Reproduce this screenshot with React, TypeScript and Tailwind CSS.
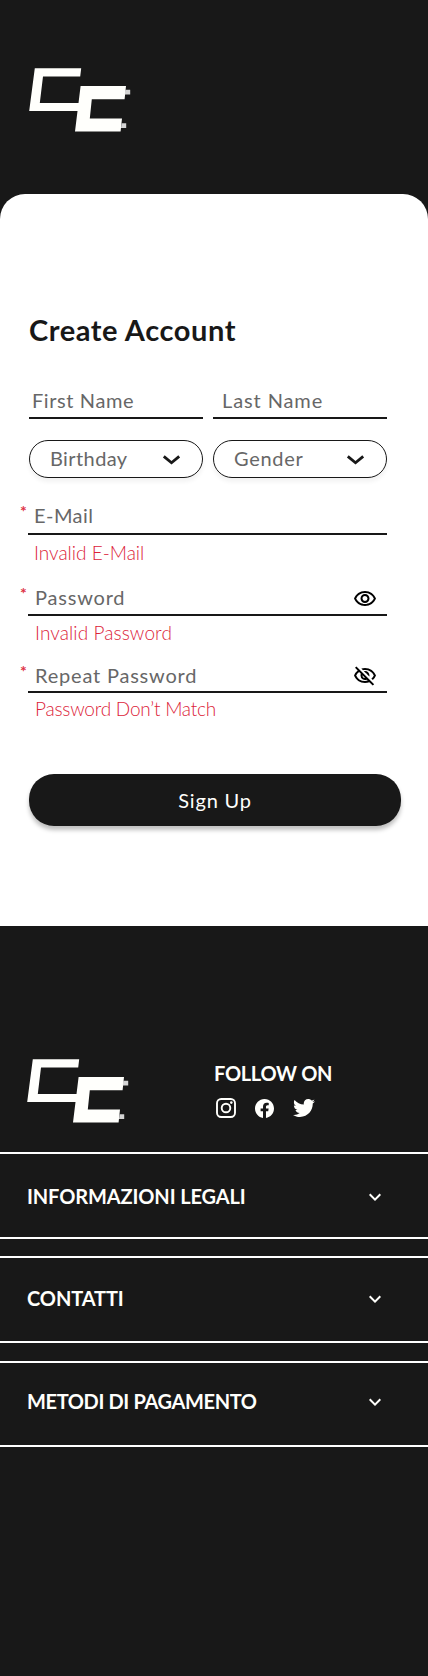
import React from "react";
import { MdOutlineVisibility, MdOutlineVisibilityOff, MdKeyboardArrowDown } from "react-icons/md";
import { BsFacebook } from "react-icons/bs";
import { FaTwitter } from "react-icons/fa";

function Logo() {
  return (
    <svg width="102" height="64" viewBox="0 0 102 64" className="block" aria-label="CC">
      <path d="M5.8 .3H52.2L51.2 8.6H14L10.8 35H50.4L49.6 42.9H.2Z" fill="#fffffc" />
      <path d="M51.6 18H97L95.6 31.2H62.8L60.8 50.5H93L91.6 63.6H46Z" fill="#fffffc" />
      <path d="M96.2 21.8H101.2V26.4H95.8ZM92.6 55.2H97.2V60H92Z" fill="#d4d4d4" />
    </svg>
  );
}

function Chevron() {
  return (
    <svg width="19" height="11" viewBox="0 0 19 11" fill="none" className="block">
      <path d="M1.8 2.4L9.5 8.8L17.2 2.4" stroke="#181818" strokeWidth="2.8" />
    </svg>
  );
}

function Instagram() {
  return (
    <svg width="20" height="20" viewBox="0 0 20 20" fill="none" className="block">
      <rect x="1" y="1" width="18" height="18" rx="4.2" stroke="#fffffc" strokeWidth="1.9" />
      <circle cx="10" cy="10" r="4.3" stroke="#fffffc" strokeWidth="1.9" />
      <circle cx="15.3" cy="4.6" r="1.3" fill="#fffffc" />
    </svg>
  );
}

function Select({ label, spacing }: { label: string; spacing: string }) {
  return (
    <button className="flex h-[38px] w-[174px] items-center justify-between rounded-[19px] border border-[#181818] bg-white pr-[21px] pl-[20px] shadow-[0_4px_4px_rgba(0,0,0,0.05)]">
      <span className={`mb-[2px] leading-6 text-[#676767] ${spacing}`}>{label}</span>
      <Chevron />
    </button>
  );
}

function Field({ label, box, spacing, icon }: { label: string; box: string; spacing: string; icon?: React.ReactNode }) {
  return (
    <div className={`relative ml-[-1px] flex w-[359px] items-start justify-between border-b-2 border-[#181818] pr-[10px] text-[#676767] ${box}`}>
      <span className="absolute top-[0px] left-[-8px] text-[16px] leading-4 font-bold text-[#dd3344]">*</span>
      <span className={`leading-6 ${spacing}`}>{label}</span>
      {icon}
    </div>
  );
}

function Section({ title, box, spacing }: { title: string; box: string; spacing: string }) {
  return (
    <div className={`flex items-start justify-between border-y-2 border-white pr-[41px] pl-[27px] ${box}`}>
      <span className={`leading-6 font-bold text-[#fffffc] ${spacing}`}>{title}</span>
      <MdKeyboardArrowDown size={24} color="#fffffc" className="mt-[1px]" />
    </div>
  );
}

export default function App() {
  return (
    <div className="min-h-[1676px] w-[428px] bg-[#181818] font-['Lato',sans-serif] text-[20px] whitespace-nowrap">
      <header className="h-[194px] pt-[68px] pl-[29px]">
        <Logo />
      </header>
      <main className="h-[732px] rounded-t-[25px] bg-white pt-[119px] pr-[27px] pl-[29px]">
        <h1 className="text-[29px] leading-[34px] font-bold tracking-[0.58px] text-[#181818]">Create Account</h1>
        <div className="mt-[41px] flex gap-[10px] text-[#676767]">
          <div className="h-[31px] w-[174px] border-b-2 border-[#181818] pl-[3px] leading-6 tracking-[0.6px]">First Name</div>
          <div className="h-[31px] w-[174px] border-b-2 border-[#181818] pl-[9px] leading-6 tracking-[0.9px]">Last Name</div>
        </div>
        <div className="mt-[21px] flex gap-[10px]">
          <Select label="Birthday" spacing="tracking-[0.4px]" />
          <Select label="Gender" spacing="tracking-[0.7px]" />
        </div>
        <Field label="E-Mail" box="mt-[25px] h-[32px] pl-[6px]" spacing="tracking-[0.45px]" />
        <p className="mt-[6px] pl-[5px] text-[19px] leading-6 font-light text-[#dc2339]">Invalid E-Mail</p>
        <Field label="Password" box="mt-[20px] h-[31px] pl-[7px]" spacing="tracking-[0.8px]" icon={<MdOutlineVisibility size={24} color="#000" className="mt-[2px]" />} />
        <p className="mt-[5px] pl-[6px] text-[19px] leading-6 font-light tracking-[0.1px] text-[#dc2339]">Invalid Password</p>
        <Field label="Repeat Password" box="mt-[18px] h-[30px] pl-[7px]" spacing="tracking-[0.8px]" icon={<MdOutlineVisibilityOff size={24} color="#000" className="mt-[1px]" />} />
        <p className="mt-[4px] pl-[6px] text-[19px] leading-6 font-light tracking-[-0.22px] text-[#dc2339]">Password Don’t Match</p>
        <button className="mt-[53px] block h-[52px] w-[372px] rounded-[25px] bg-[#181818] leading-6 tracking-[0.8px] text-[#fffffc] shadow-[0_4px_4px_rgba(0,0,0,0.25)]">
          Sign Up
        </button>
      </main>
      <footer>
        <div className="flex h-[226px] pt-[133px] pl-[27px]">
          <div className="w-[187px]"><Logo /></div>
          <div className="pt-[2px]">
            <div className="leading-6 font-bold tracking-[-0.3px] text-[#fffffc]">FOLLOW ON</div>
            <div className="mt-[12px] flex items-center pl-[2px]">
              <Instagram />
              <BsFacebook size={19} color="#fffffc" className="ml-[19px]" />
              <FaTwitter size={22} color="#fffffc" className="ml-[19px]" />
            </div>
          </div>
        </div>
        <Section title="INFORMAZIONI LEGALI" box="h-[87px] pt-[30px]" spacing="tracking-[-0.12px]" />
        <div className="h-[17px]" />
        <Section title="CONTATTI" box="h-[87px] pt-[28px]" spacing="tracking-[-0.1px]" />
        <div className="h-[18px]" />
        <Section title="METODI DI PAGAMENTO" box="h-[86px] pt-[26px]" spacing="tracking-[-0.37px]" />
      </footer>
    </div>
  );
}
